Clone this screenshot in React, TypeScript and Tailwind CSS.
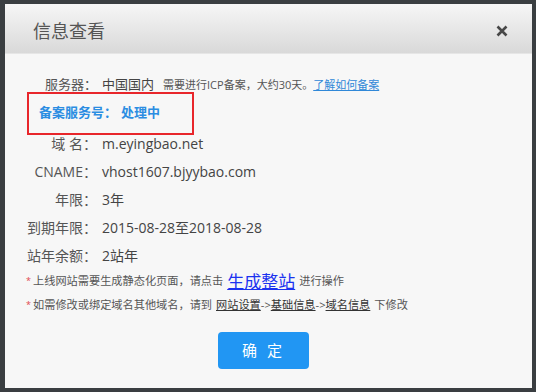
import React from 'react';

const font = { fontFamily: '"Open Sans", "Noto Sans CJK SC", sans-serif' };

const InfoRow = ({ label, children }: { label: string; children: React.ReactNode }) => (
  <div className="flex h-[28px] items-center text-[14px]">
    <span className="w-[92px] shrink-0 text-right text-[#555]">{label}</span>
    <span className="pl-[5px] text-[#444]">{children}</span>
  </div>
);

const App = () => {
  return (
    <div className="w-[536px] h-[392px] bg-[#3a3e41] pt-[4px] pl-[5px] pr-[4px] pb-[4px]" style={font}>
      <div className="flex h-full flex-col bg-[#f7f7f7]">
        {/* Header */}
        <div className="flex h-[50px] shrink-0 items-center justify-between border-b border-[#e6e6e6] bg-gradient-to-b from-[#f6f6f6] to-[#d9d9d9] pl-[28px] pr-[24px] pt-[6px]">
          <span className="text-[18px] text-[#555]">信息查看</span>
          <svg width="12" height="12" viewBox="0 0 12 12" className="mb-[2px]">
            <path d="M1.5 1.5 L10.5 10.5 M10.5 1.5 L1.5 10.5" stroke="#474747" strokeWidth="2.6" strokeLinecap="butt" />
          </svg>
        </div>

        {/* Body */}
        <div className="flex flex-col pt-[17px]">
          <div className="flex h-[28px] items-center text-[13px]">
            <span className="w-[92px] shrink-0 text-right text-[#555]">服务器：</span>
            <span className="pl-[5px] text-[#444]">中国国内</span>
            <span className="ml-[9px] text-[11px] text-[#555]">需要进行ICP备案，大约30天。</span>
            <a className="text-[11px] text-[#3088d8] underline">了解如何备案</a>
          </div>

          <div className="relative flex h-[28px] items-center pl-[34px] text-[13px] font-bold text-[#2b8de2]">
            <div className="absolute -top-[7px] -bottom-[8px] left-[22px] w-[167px] border-2 border-[#e8262b]" />
            <span>备案服务号：</span>
            <span className="ml-[4px]">处理中</span>
          </div>

          <div className="mt-[2px]">
            <InfoRow label="域 名：">m.eyingbao.net</InfoRow>
          </div>
          <InfoRow label="CNAME：">vhost1607.bjyybao.com</InfoRow>
          <InfoRow label="年限：">3年</InfoRow>
          <InfoRow label="到期年限：">2015-08-28至2018-08-28</InfoRow>
          <InfoRow label="站年余额：">2站年</InfoRow>

          <div className="flex h-[24px] items-center pl-[21px] text-[11.2px] text-[#555]">
            <span className="w-[7px] text-[9px] text-[#e0464a]">*</span>
            <span>上线网站需要生成静态化页面，请点击</span>
            <a className="mx-[4px] text-[17px] leading-none text-[#1b32f0] underline">生成整站</a>
            <span>进行操作</span>
          </div>
          <div className="flex h-[24px] items-center pl-[21px] text-[11.2px] text-[#555]">
            <span className="w-[7px] text-[9px] text-[#e0464a]">*</span>
            <span>如需修改或绑定域名其他域名，请到</span>
            <a className="ml-[4px] text-[#333] underline">网站设置</a>
            <span>-&gt;</span>
            <a className="text-[#333] underline">基础信息</a>
            <span>-&gt;</span>
            <a className="text-[#333] underline">域名信息</a>
            <span className="ml-[4px]">下修改</span>
          </div>

          <div className="mt-[15px] pl-[213px]">
            <button className="h-[37px] w-[91px] rounded-[4px] bg-[#2196f3] text-[15px] text-white tracking-[3px]">
              确 定
            </button>
          </div>
        </div>
      </div>
    </div>
  );
};

export default App;
